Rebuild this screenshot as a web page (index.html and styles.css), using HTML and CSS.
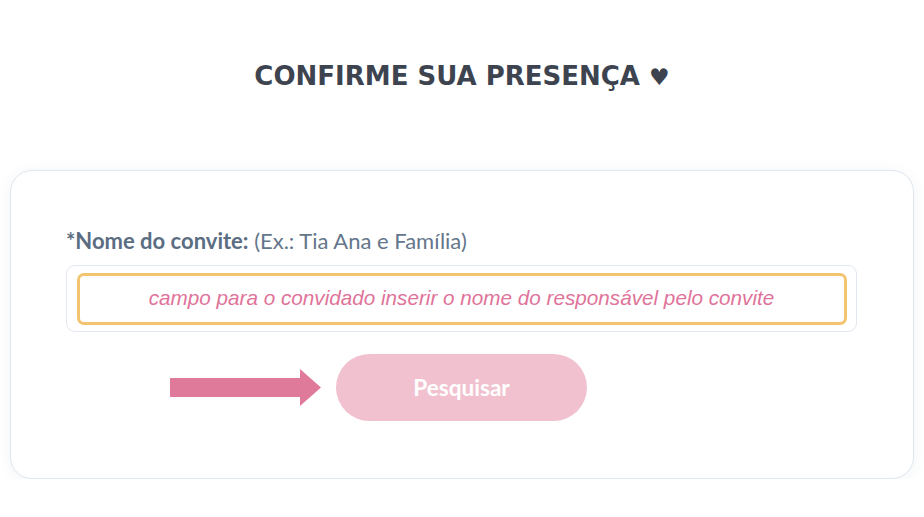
FILE: index.html
```html
<!DOCTYPE html>
<html lang="pt-BR">
<head>
<meta charset="utf-8">
<title>Confirme sua presença</title>
<link rel="stylesheet" href="styles.css">
</head>
<body>
<section class="rsvp">
  <h2 class="rsvp-title">CONFIRME SUA PRESENÇA <span class="heart">♥</span></h2>
  <div class="card">
    <label class="field-label"><strong>*Nome do convite:</strong> (Ex.: Tia Ana e Família)</label>
    <div class="input-box">
      <div class="input-hint">campo para o convidado inserir o nome do responsável pelo convite</div>
    </div>
    <div class="action-row">
      <svg class="arrow" width="151" height="37" viewBox="0 0 151 37" aria-hidden="true">
        <polygon points="0,9 130,9 130,0 151,18.5 130,37 130,28 0,28" fill="#e07a9a"/>
      </svg>
      <button class="search-btn" type="button">Pesquisar</button>
      <span></span>
    </div>
  </div>
</section>
</body>
</html>
```
FILE: styles.css
```css
* { box-sizing: border-box; }
html, body { margin: 0; background: #ffffff; }
body { font-family: Lato, "Open Sans", sans-serif; }

.rsvp {
  height: 479px;
  overflow: hidden;
  padding: 56px 10px 0 10px;
}

.rsvp-title {
  margin: 0 0 74px 0;
  text-align: center;
  font-family: "DejaVu Sans", "Open Sans", sans-serif;
  font-weight: 700;
  font-size: 26px;
  line-height: 40px;
  letter-spacing: 0;
  color: #3d4450;
}
.rsvp-title .heart { font-size: 23px; line-height: 1; }

.card {
  width: 904px;
  height: 309px;
  background: #ffffff;
  border: 1px solid #dfe6ef;
  border-radius: 22px;
  box-shadow: 0 2px 14px rgba(60, 80, 120, 0.07);
  padding: 57px 56px 0 55px;
}

.field-label {
  display: block;
  font-size: 22px;
  line-height: 26px;
  color: #64768b;
  margin-bottom: 11px;
}
.field-label strong { font-weight: 700; color: #5b6d82; }

.input-box {
  width: 791px;
  height: 67px;
  border: 1.5px solid #e1e7ef;
  border-radius: 9px;
  padding: 6.5px 9.5px;
}
.input-hint {
  height: 52px;
  border: 3px solid #f2c46f;
  border-radius: 7px;
  display: flex;
  align-items: center;
  justify-content: center;
  font-family: "Liberation Sans", Arial, sans-serif;
  font-style: italic;
  font-size: 20.7px;
  color: #e0739a;
  padding-bottom: 2px;
}

.action-row {
  margin-top: 22px;
  display: grid;
  grid-template-columns: 1fr auto 1fr;
  align-items: center;
  margin-left: -56px;
  margin-right: -56px;
}
.arrow {
  justify-self: end;
  margin-right: 15px;
  display: block;
}
.search-btn {
  width: 251px;
  height: 67px;
  border: none;
  border-radius: 34px;
  background: #f1c1cf;
  color: #ffffff;
  font-family: Lato, sans-serif;
  font-weight: 700;
  font-size: 22.6px;
  padding: 0;
}
```
